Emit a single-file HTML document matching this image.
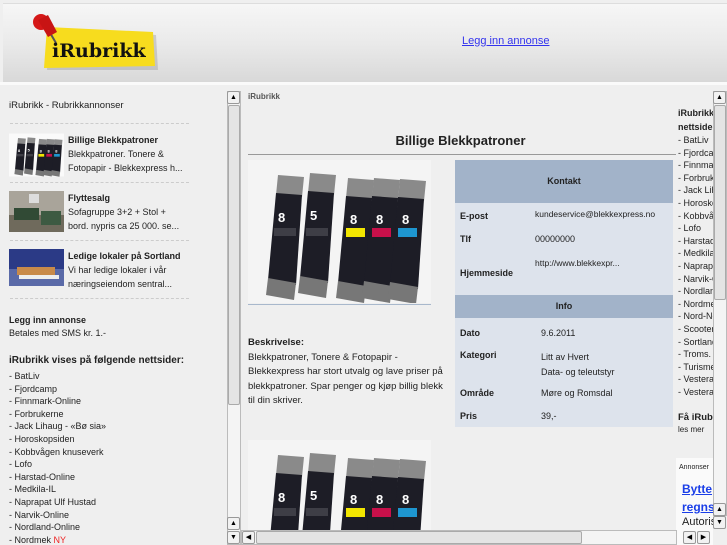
<!DOCTYPE html>
<html><head><meta charset="utf-8"><style>
*{margin:0;padding:0;box-sizing:border-box}
html,body{width:727px;height:545px;overflow:hidden}
body{background:#efefef;font-family:"Liberation Sans",sans-serif;color:#222;position:relative;font-size:9px}
.hdr{position:absolute;left:3px;top:3px;width:724px;height:80px;background:linear-gradient(#f6f6f6,#eaeaea 50%,#d8d8d8);border-top:1px solid #ddd}
.abs{position:absolute}
.sb{position:absolute;background:#f4f4f4;border:1px solid #bbb}
.btn{position:absolute;width:13px;height:13px;background:#f2f2f2;border:1px solid #999;border-radius:2px;font-size:7px;line-height:11px;text-align:center;color:#000}
.thumb{position:absolute;background:#e4e4e4;border:1px solid #aaa;border-radius:2px}
.dash{position:absolute;left:10px;width:179px;border-top:1px dashed #ccc}
.li{position:absolute;left:68px;font-size:9px;line-height:14px;color:#222}
.list div{height:12.6px;line-height:12px}
.tbl{position:absolute;left:455px;top:160px;width:218px;background:#dde3ec;font-size:9px}
.th{background:#a2b3c9;text-align:center;font-weight:bold}
</style></head><body>
<svg width="0" height="0" style="position:absolute"><defs>
<g id="cart">
<polygon points="0,0 26,2 24,22 -2,20" fill="#8a8a8a"/>
<polygon points="-2,18 24,20 18,110 -10,105" fill="#1d1d26"/>
<polygon points="-10,103 18,108 16,125 -12,120" fill="#777"/>
</g>
<g id="carts">
<use href="#cart" x="30" y="15"/><use href="#cart" x="62" y="13"/><use href="#cart" x="100" y="18"/><use href="#cart" x="126" y="18"/><use href="#cart" x="152" y="19"/>
<rect x="98" y="68" width="19" height="9" fill="#f2e600"/><rect x="124" y="68" width="19" height="9" fill="#c8104a"/><rect x="150" y="68" width="19" height="9" fill="#1e96d0"/>
<rect x="26" y="68" width="22" height="8" fill="#fff" opacity=".15"/><rect x="58" y="68" width="22" height="8" fill="#fff" opacity=".15"/>
<g fill="#fff" font-weight="bold" font-size="13"><text x="30" y="62">8</text><text x="62" y="60">5</text><text x="102" y="64">8</text><text x="128" y="64">8</text><text x="154" y="64">8</text></g>
</g>
</defs></svg>
<div class="hdr"></div>
<svg class="abs" style="left:30px;top:10px" width="130" height="62" viewBox="0 0 130 62">
<polygon points="19,20 126,25 128,60 17,60" fill="#999" opacity=".4"/>
<polygon points="17,17 123,22 125,56 14,58" fill="#f7dc1e"/>
<line x1="16" y1="16" x2="26" y2="33" stroke="#555" stroke-width="2"/>
<circle cx="11" cy="12" r="8" fill="#d51818"/>
<polygon points="8,10 18,5 27,22 18,27" fill="#c81414"/>
<text x="22" y="47" font-family="DejaVu Serif,serif" font-weight="bold" font-size="19" fill="#111">iRubrikk</text>
</svg>
<a class="abs" style="left:462px;top:35px;font-size:11px;color:#3333ee;text-decoration:underline">Legg inn annonse</a>
<div class="abs" style="left:0;top:82px;width:727px;height:3px;background:#fafafa"></div>

<div class="abs" style="left:9px;top:100px;font-size:9.5px">iRubrikk - Rubrikkannonser</div>
<div class="dash" style="top:123px"></div>
<svg class="abs" style="left:9px;top:133px" width="55" height="44" viewBox="0 0 183 143"><rect width="183" height="143" fill="#fafafa"/><use href="#carts"/></svg>
<div class="li" style="top:133px"><b>Billige Blekkpatroner</b><br>Blekkpatroner. Tonere &amp;<br>Fotopapir - Blekkexpress h...</div>
<div class="dash" style="top:182px"></div>
<svg class="abs" style="left:9px;top:191px" width="55" height="41"><rect width="55" height="41" fill="#a9a49a"/><rect y="24" width="55" height="17" fill="#6f6a5c"/><rect x="5" y="17" width="25" height="12" fill="#314a35"/><rect x="32" y="20" width="20" height="14" fill="#3d5a42"/><rect x="20" y="3" width="10" height="9" fill="#ddd"/></svg>
<div class="li" style="top:191px"><b>Flyttesalg</b><br>Sofagruppe 3+2 + Stol +<br>bord. nypris ca 25 000. se...</div>
<div class="dash" style="top:240px"></div>
<svg class="abs" style="left:9px;top:249px" width="55" height="37"><rect width="55" height="37" fill="#2b3a86"/><rect y="20" width="55" height="17" fill="#5a6aa8"/><rect x="8" y="18" width="38" height="8" fill="#c88a4a"/><rect x="10" y="26" width="40" height="4" fill="#eee"/></svg>
<div class="li" style="top:249px"><b>Ledige lokaler på Sortland</b><br>Vi har ledige lokaler i vår<br>næringseiendom sentral...</div>
<div class="dash" style="top:298px"></div>
<div class="abs" style="left:9px;top:314px;font-size:9px;line-height:13px"><b>Legg inn annonse</b><br>Betales med SMS kr. 1.-</div>
<div class="abs list" style="left:9px;top:355px;font-size:9px;height:190px;overflow:hidden">
<div style="font-size:10px;font-weight:bold;height:15px">iRubrikk vises på følgende nettsider:</div>
<div>- BatLiv</div><div>- Fjordcamp</div><div>- Finnmark-Online</div><div>- Forbrukerne</div><div>- Jack Lihaug - «Bø sia»</div><div>- Horoskopsiden</div><div>- Kobbvågen knuseverk</div><div>- Lofo</div><div>- Harstad-Online</div><div>- Medkila-IL</div><div>- Naprapat Ulf Hustad</div><div>- Narvik-Online</div><div>- Nordland-Online</div><div>- Nordmek <span style="color:#e22">NY</span></div>
</div>
<div class="sb" style="left:227px;top:91px;width:14px;height:454px"></div>
<div class="btn" style="left:227px;top:91px">▲</div>
<div class="thumb" style="left:228px;top:105px;width:12px;height:300px"></div>
<div class="btn" style="left:227px;top:517px">▲</div>
<div class="btn" style="left:227px;top:531px">▼</div>

<div class="abs" style="left:248px;top:92px;font-size:8px;font-weight:bold;color:#555">iRubrikk</div>
<div class="abs" style="left:248px;top:133px;width:425px;text-align:center;font-size:13px;font-weight:bold">Billige Blekkpatroner</div>
<div class="abs" style="left:248px;top:154px;width:428px;border-top:1px solid #999"></div>
<svg class="abs" style="left:248px;top:160px" width="183" height="143"><rect width="183" height="143" fill="#f4f4f4"/><use href="#carts"/></svg>
<div class="abs" style="left:248px;top:304px;width:183px;border-top:1px solid #a8b8cc"></div>
<div class="abs" style="left:248px;top:336px;width:200px;font-size:9.5px;line-height:14.5px"><b>Beskrivelse:</b><br>Blekkpatroner, Tonere &amp; Fotopapir - Blekkexpress har stort utvalg og lave priser på blekkpatroner. Spar penger og kjøp billig blekk til din skriver.</div>
<svg class="abs" style="left:248px;top:440px" width="183" height="90"><rect width="183" height="90" fill="#f4f4f4"/><use href="#carts"/></svg>

<div class="tbl">
<div class="th" style="height:43px;line-height:43px">Kontakt</div>
<div style="position:relative;height:92px">
<b class="abs" style="left:5px;top:8px">E-post</b><span class="abs" style="left:80px;top:6px;font-size:8.5px">kundeservice@blekkexpress.no</span>
<b class="abs" style="left:5px;top:31px">Tlf</b><span class="abs" style="left:80px;top:31px">00000000</span>
<b class="abs" style="left:5px;top:65px">Hjemmeside</b><span class="abs" style="left:80px;top:55px;font-size:8.5px">http://www.blekkexpr...</span>
</div>
<div class="th" style="height:23px;line-height:23px">Info</div>
<div style="position:relative;height:109px">
<b class="abs" style="left:5px;top:10px">Dato</b><span class="abs" style="left:86px;top:10px">9.6.2011</span>
<b class="abs" style="left:5px;top:32px">Kategori</b><span class="abs" style="left:86px;top:32px;line-height:15px">Litt av Hvert<br>Data- og teleutstyr</span>
<b class="abs" style="left:5px;top:70px">Område</b><span class="abs" style="left:86px;top:70px">Møre og Romsdal</span>
<b class="abs" style="left:5px;top:93px">Pris</b><span class="abs" style="left:86px;top:93px">39,-</span>
</div>
</div>

<div class="abs" style="left:678px;top:106px;width:35px;height:340px;overflow:hidden;white-space:nowrap;font-size:9px">
<div style="font-weight:bold;line-height:14px">iRubrikk vises på<br>nettsider:</div>
<div class="list">
<div>- BatLiv</div><div>- Fjordcamp</div><div>- Finnmark</div><div>- Forbrukerne</div><div>- Jack Lihaug</div><div>- Horoskop</div><div>- Kobbvågen</div><div>- Lofo</div><div>- Harstad</div><div>- Medkila</div><div>- Naprapat</div><div>- Narvik-O</div><div>- Nordland</div><div>- Nordmek</div><div>- Nord-Norge</div><div>- Scooter</div><div>- Sortland</div><div>- Troms.</div><div>- Turisme</div><div>- Vesteraalen</div><div>- Vesteraalen</div>
</div>
<div style="margin-top:14px;font-weight:bold;font-size:9.5px">Få iRubrikk</div>
<div style="font-size:8px;margin-top:2px">les mer</div>
</div>
<div class="abs" style="left:676px;top:458px;width:37px;height:87px;background:#fafafa;overflow:hidden;white-space:nowrap">
<div style="font-size:7px;margin:6px 0 0 3px">Annonser</div>
<div style="font-size:12px;color:#1a3ee8;text-decoration:underline;font-weight:bold;margin:9px 0 0 6px;line-height:18px">Bytte<br>regnskap</div>
<div style="font-size:11px;margin-left:6px">Autorisert</div>
</div>
<div class="sb" style="left:713px;top:91px;width:14px;height:425px"></div>
<div class="btn" style="left:713px;top:91px">▲</div>
<div class="thumb" style="left:714px;top:105px;width:12px;height:195px"></div>
<div class="btn" style="left:713px;top:503px">▲</div>
<div class="btn" style="left:713px;top:516px">▼</div>
<div class="sb" style="left:241px;top:530px;width:436px;height:15px"></div>
<div class="btn" style="left:242px;top:531px">◀</div>
<div class="thumb" style="left:256px;top:531px;width:326px;height:13px"></div>
<div class="btn" style="left:683px;top:531px">◀</div>
<div class="btn" style="left:697px;top:531px">▶</div>
</body></html>
